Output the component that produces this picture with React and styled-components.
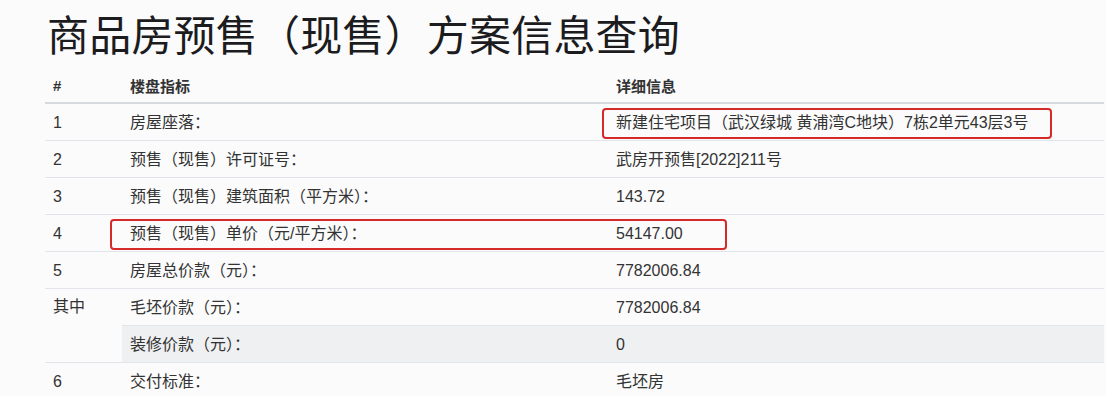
import React from "react";
import styled, { createGlobalStyle } from "styled-components";

const Global = createGlobalStyle`
  html, body { margin: 0; padding: 0; background: #fbfbfc; }
  body { font-family: "Liberation Sans", "Noto Sans CJK SC", sans-serif; color: #333; }
`;

const Page = styled.div`
  width: 1106px;
  height: 396px;
  overflow: hidden;
  padding: 8px 2px 0 45px;
  box-sizing: border-box;
`;

const Title = styled.h1`
  margin: 0 0 12px 2px;
  height: 50px;
  font-family: "Noto Sans CJK SC", sans-serif;
  font-size: 42px;
  line-height: 50px;
  font-weight: 400;
  color: #1c1c1e;
  letter-spacing: 0.2px;
`;

const TableWrap = styled.div`
  position: relative;
`;

const Table = styled.table`
  width: 1059px;
  border-collapse: separate;
  border-spacing: 0;
  table-layout: fixed;
  font-size: 16px;
`;

const Th = styled.th`
  box-sizing: border-box;
  height: 34px;
  padding: 0 8px 2px;
  text-align: left;
  vertical-align: middle;
  font-size: 15px;
  font-weight: 700;
  color: #333;
  border-bottom: 2px solid #d6d9dd;
`;

const Td = styled.td`
  box-sizing: border-box;
  height: 36.3px;
  padding: ${(p) => (p.$top ? "0 8px" : "1px 8px 0")};
  line-height: 35px;
  vertical-align: ${(p) => (p.$top ? "top" : "middle")};
  border-bottom: 1px solid #e1e4e8;
  color: #333;
  background: ${(p) => (p.$shade ? "#eff0f2" : "transparent")};
  white-space: nowrap;
`;

const Highlight = styled.div`
  position: absolute;
  left: ${(p) => p.$x}px;
  top: ${(p) => p.$y}px;
  width: ${(p) => p.$w}px;
  height: ${(p) => p.$h}px;
  border: 2px solid #d42a2a;
  border-radius: 4px;
  box-sizing: border-box;
  pointer-events: none;
`;

const rows = [
  ["1", "房屋座落：", "新建住宅项目（武汉绿城 黄浦湾C地块）7栋2单元43层3号"],
  ["2", "预售（现售）许可证号：", "武房开预售[2022]211号"],
  ["3", "预售（现售）建筑面积（平方米）：", "143.72"],
  ["4", "预售（现售）单价（元/平方米）：", "54147.00"],
  ["5", "房屋总价款（元）：", "7782006.84"],
];

export default function App() {
  return (
    <>
      <Global />
      <Page>
        <Title>商品房预售（现售）方案信息查询</Title>
        <TableWrap>
          <Table>
            <colgroup>
              <col style={{ width: 77 }} />
              <col style={{ width: 486 }} />
              <col />
            </colgroup>
            <thead>
              <tr>
                <Th>#</Th>
                <Th>楼盘指标</Th>
                <Th>详细信息</Th>
              </tr>
            </thead>
            <tbody>
              {rows.map(([n, label, value]) => (
                <tr key={n}>
                  <Td>{n}</Td>
                  <Td>{label}</Td>
                  <Td>{value}</Td>
                </tr>
              ))}
              <tr>
                <Td rowSpan={2} $top>其中</Td>
                <Td>毛坯价款（元）：</Td>
                <Td>7782006.84</Td>
              </tr>
              <tr>
                <Td $shade>装修价款（元）：</Td>
                <Td $shade>0</Td>
              </tr>
              <tr>
                <Td>6</Td>
                <Td>交付标准：</Td>
                <Td>毛坯房</Td>
              </tr>
            </tbody>
          </Table>
          <Highlight $x={557} $y={38} $w={450} $h={31} />
          <Highlight $x={65} $y={149} $w={617} $h={31} />
        </TableWrap>
      </Page>
    </>
  );
}
